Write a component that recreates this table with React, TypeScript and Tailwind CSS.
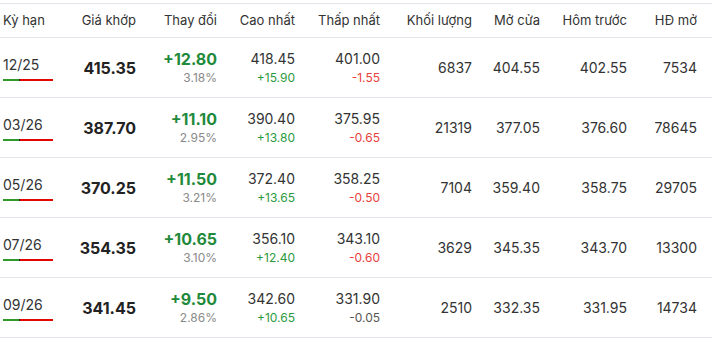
import React from "react";

type Row = {
  term: string;
  price: string;
  change: string;
  pct: string;
  high: string;
  highChg: string;
  low: string;
  lowChg: string;
  lowTone: "red" | "gray";
  volume: string;
  open: string;
  prev: string;
  oi: string;
};

const rows: Row[] = [
  { term: "12/25", price: "415.35", change: "+12.80", pct: "3.18%", high: "418.45", highChg: "+15.90", low: "401.00", lowChg: "-1.55", lowTone: "red", volume: "6837", open: "404.55", prev: "402.55", oi: "7534" },
  { term: "03/26", price: "387.70", change: "+11.10", pct: "2.95%", high: "390.40", highChg: "+13.80", low: "375.95", lowChg: "-0.65", lowTone: "red", volume: "21319", open: "377.05", prev: "376.60", oi: "78645" },
  { term: "05/26", price: "370.25", change: "+11.50", pct: "3.21%", high: "372.40", highChg: "+13.65", low: "358.25", lowChg: "-0.50", lowTone: "red", volume: "7104", open: "359.40", prev: "358.75", oi: "29705" },
  { term: "07/26", price: "354.35", change: "+10.65", pct: "3.10%", high: "356.10", highChg: "+12.40", low: "343.10", lowChg: "-0.60", lowTone: "red", volume: "3629", open: "345.35", prev: "343.70", oi: "13300" },
  { term: "09/26", price: "341.45", change: "+9.50", pct: "2.86%", high: "342.60", highChg: "+10.65", low: "331.90", lowChg: "-0.05", lowTone: "gray", volume: "2510", open: "332.35", prev: "331.95", oi: "14734" },
];

const headers = ["Giá khớp", "Thay đổi", "Cao nhất", "Thấp nhất", "Khối lượng", "Mở cửa", "Hôm trước", "HĐ mở"];

const grid = "grid grid-cols-[57px_76px_81px_78px_85px_92px_68px_87px_70px] pl-[3px] pr-[15px]";

export default function App() {
  return (
    <div className="w-[712px] h-[342px] bg-white pt-[3px] text-[#333] font-['Inter',sans-serif]">
      {/* header */}
      <div className={`${grid} h-[35px] items-center border-y border-[#e3e5ea] text-[13px]`}>
        <div>Kỳ hạn</div>
        {headers.map((h) => (
          <div key={h} className="text-right">{h}</div>
        ))}
      </div>

      {rows.map((r) => (
        <div key={r.term} className={`${grid} h-[60px] items-center border-b border-[#e3e5ea]`}>
          <div className="flex flex-col items-start pt-[1px]">
            <span className="text-[14px] leading-[18px] text-[#333]">{r.term}</span>
            <div className="mt-[5px] flex h-[2px] w-[50px]">
              <div className="w-[16px] bg-[#2f9a2a]" />
              <div className="w-[1px] bg-[#222]" />
              <div className="flex-1 bg-[#e10600]" />
            </div>
          </div>
          <div className="text-right text-[16px] font-bold text-[#222]">{r.price}</div>
          <div className="flex flex-col items-end">
            <span className="text-[16px] leading-[20px] font-bold text-[#1f8a3b]">{r.change}</span>
            <span className="mt-[1px] text-[12px] leading-[16px] text-[#8a8a8a]">{r.pct}</span>
          </div>
          <div className="flex flex-col items-end">
            <span className="text-[14px] leading-[20px]">{r.high}</span>
            <span className="mt-[1px] text-[12px] leading-[16px] text-[#2b9a3e]">{r.highChg}</span>
          </div>
          <div className="flex flex-col items-end">
            <span className="text-[14px] leading-[20px]">{r.low}</span>
            <span className={`mt-[1px] text-[12px] leading-[16px] ${r.lowTone === "red" ? "text-[#e8413b]" : "text-[#555]"}`}>{r.lowChg}</span>
          </div>
          <div className="text-right text-[14px]">{r.volume}</div>
          <div className="text-right text-[14px]">{r.open}</div>
          <div className="text-right text-[14px]">{r.prev}</div>
          <div className="text-right text-[14px]">{r.oi}</div>
        </div>
      ))}
    </div>
  );
}
